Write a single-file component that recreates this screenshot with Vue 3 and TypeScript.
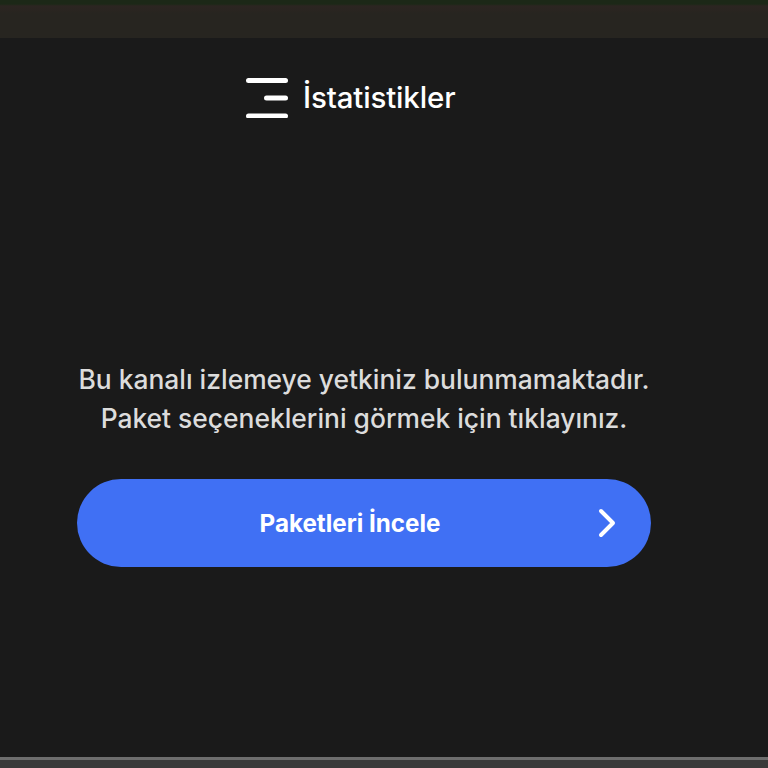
<script setup lang="ts">
const lines: string[] = [
  'Bu kanalı izlemeye yetkiniz bulunmamaktadır.',
  'Paket seçeneklerini görmek için tıklayınız.',
]
</script>

<template>
  <div class="page">
    <div class="topbar"></div>
    <main class="main">
      <header class="title-row">
        <svg class="menu-icon" width="42" height="40" viewBox="0 0 42 40" fill="none" stroke="#fff" stroke-width="5" stroke-linecap="round">
          <path d="M2.5 2.5H39.5" />
          <path d="M20.5 20H39.5" />
          <path d="M2.5 38H39.5" />
        </svg>
        <h1 class="title">İstatistikler</h1>
      </header>
      <section class="message">
        <p v-for="line in lines" :key="line" class="line">{{ line }}</p>
      </section>
      <button class="cta" type="button">
        <span class="cta-label">Paketleri İncele</span>
        <svg class="chevron" width="18" height="30" viewBox="0 0 18 30" fill="none" stroke="#fff" stroke-width="4" stroke-linecap="round" stroke-linejoin="round">
          <path d="M3 3L15 15L3 27" />
        </svg>
      </button>
    </main>
    <div class="bottombar"></div>
  </div>
</template>

<style>
html, body { margin: 0; background: #1a1a1a; }
</style>

<style scoped>
.page {
  width: 768px;
  height: 768px;
  display: flex;
  flex-direction: column;
  overflow: hidden;
  font-family: Inter, "Noto Sans", sans-serif;
  background: #1a1a1a;
}
.topbar {
  height: 38px;
  flex: none;
  background: linear-gradient(to bottom, #1c2817 0, #1c2817 4px, #2c2521 6px, #272520 14px, #272520 100%);
}
.main {
  flex: 1;
  display: flex;
  flex-direction: column;
  background: #1a1a1a;
  padding: 40px 117px 0 77px;
  box-sizing: border-box;
}
.title-row {
  display: flex;
  align-items: center;
  gap: 15px;
  margin-left: 169px;
  height: 40px;
}
.menu-icon { flex: none; }
.title {
  margin: 0;
  font-size: 29.5px;
  font-weight: 500;
  letter-spacing: -0.15px;
  color: #fff;
  white-space: nowrap;
  position: relative;
  top: -1px;
}
.message {
  width: 574px;
  margin-top: 242px;
  text-align: center;
  color: #dcdcdc;
  font-size: 26.4px;
  font-weight: 500;
  line-height: 39px;
}
.line { margin: 0; white-space: nowrap; }
.cta {
  position: relative;
  width: 574px;
  height: 88px;
  flex: none;
  margin-top: 41px;
  border: 0;
  border-radius: 44px;
  background: #4070f4;
  color: #fff;
  font-family: inherit;
  padding: 0 28px 0 0;
  display: flex;
  align-items: center;
  justify-content: center;
}
.cta-label {
  font-size: 24.2px;
  font-weight: 700;
}
.chevron {
  position: absolute;
  right: 35px;
  top: 29px;
}
.bottombar {
  height: 11px;
  flex: none;
  background: #3a3a3a;
  border-top: 3px solid #6e6e6e;
  box-sizing: content-box;
  height: 8px;
}
</style>
